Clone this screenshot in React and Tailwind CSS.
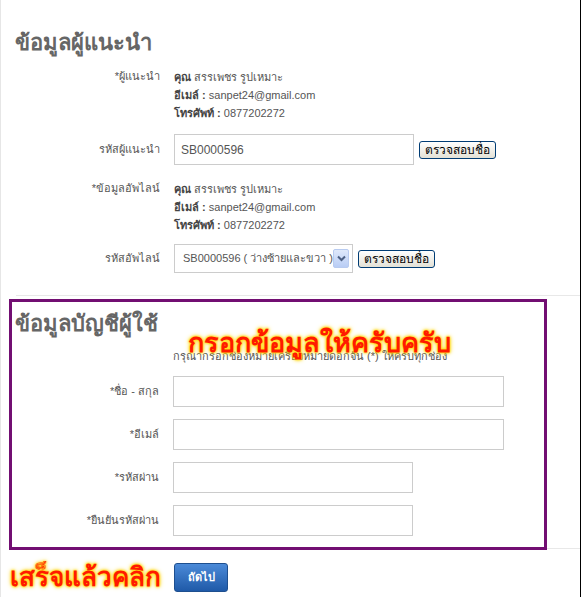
import React from 'react';

const FONT = "font-['Liberation_Sans',_'DejaVu_Sans',_sans-serif]";
const GLOW = "[text-shadow:0_0_2px_#ffee00,0_0_3px_#ffcc00,0_0_5px_#ffd000]";

const XpButton = ({ children }) => (
  <button className="h-[18px] px-[5px] rounded-[3px] border border-[#003c74] bg-gradient-to-b from-white to-[#e3e1d6] text-[12px] leading-none text-black">
    {children}
  </button>
);

const InfoBlock = () => (
  <div className="text-[11px] leading-[18px] text-[#555]">
    <p><b className="text-[#444]">คุณ</b> สรรเพชร รูปเหมาะ</p>
    <p><b className="text-[#444]">อีเมล์ :</b> sanpet24@gmail.com</p>
    <p><b className="text-[#444]">โทรศัพท์ :</b> 0877202272</p>
  </div>
);

const Row = ({ label, children, className = '', labelClass = 'items-center' }) => (
  <div className={`flex ${labelClass} ${className}`}>
    <div className="w-[160px] shrink-0 text-right text-[11px] text-[#555] pr-[1px]">{label}</div>
    <div className="ml-[13px] flex items-center gap-[5px]">{children}</div>
  </div>
);

const TextBox = ({ w, value = '' }) => (
  <div className={`${w} h-[31px] border border-[#ccc] bg-white flex items-center px-[6px] text-[12px] text-[#555]`}>
    {value}
  </div>
);

export default function App() {
  return (
    <div className={`w-[581px] h-[597px] bg-white border-l border-[#e6e6e6] border-r border-r-black overflow-hidden ${FONT}`}>
      {/* ข้อมูลผู้แนะนำ */}
      <div className="pt-[30px]">
        <h2 className="pl-[14px] text-[22px] leading-[26px] font-bold text-[#666]">ข้อมูลผู้แนะนำ</h2>

        <Row label="*ผู้แนะนำ" className="mt-[12px]" labelClass="items-start">
          <InfoBlock />
        </Row>

        <Row label="รหัสผู้แนะนำ" className="mt-[12px]">
          <TextBox w="w-[240px]" value="SB0000596" />
          <XpButton>ตรวจสอบชื่อ</XpButton>
        </Row>

        <Row label="*ข้อมูลอัพไลน์" className="mt-[15px]" labelClass="items-start">
          <InfoBlock />
        </Row>

        <Row label="รหัสอัพไลน์" className="mt-[10px]">
          <div className="w-[179px] h-[29px] border border-[#ccc] bg-white flex items-center pl-[8px] pr-[3px] text-[11px] text-[#555]">
            <span className="flex-1 whitespace-nowrap">SB0000596 ( ว่างซ้ายและขวา )</span>
            <span className="w-[17px] h-[19px] rounded-[2px] border border-[#b8cbf0] bg-gradient-to-b from-[#dfe9fb] to-[#b9cdf5] flex items-center justify-center">
              <svg width="9" height="7" viewBox="0 0 9 7"><path d="M1 1.5 L4.5 5 L8 1.5" stroke="#4d6185" strokeWidth="2" fill="none" /></svg>
            </span>
          </div>
          <XpButton>ตรวจสอบชื่อ</XpButton>
        </Row>
      </div>

      <div className="mt-[22px] ml-[15px] border-t border-[#e8e8e8]" />

      {/* ข้อมูลบัญชีผู้ใช้ */}
      <div className="flex mt-[3px]">
        <div className="relative ml-[8px] w-[538px] h-[251px] border-[3px] border-[#720e72]">
          <h2 className="pl-[3px] pt-[9px] text-[22px] leading-[26px] font-bold text-[#666]">ข้อมูลบัญชีผู้ใช้</h2>
          <p className="ml-[161px] mt-[12px] text-[11px] leading-[14px] text-[#555]">
            กรุณากรอกช่องหมายเครื่องหมายดอกจัน (*) ให้ครบทุกช่อง
          </p>
          <div className={`absolute left-[176px] top-[25px] whitespace-nowrap text-[27px] leading-[32px] font-bold text-[#ff1a00] ${GLOW}`}>
            กรอกข้อมูลให้ครับครับ
          </div>
          <div className="-ml-[12px] mt-[13px] flex flex-col gap-[12px]">
            <Row label="*ชื่อ - สกุล"><TextBox w="w-[331px]" /></Row>
            <Row label="*อีเมล์"><TextBox w="w-[331px]" /></Row>
            <Row label="*รหัสผ่าน"><TextBox w="w-[240px]" /></Row>
            <Row label="*ยืนยันรหัสผ่าน"><TextBox w="w-[240px]" /></Row>
          </div>
        </div>
        <div className="flex-1 self-end border-b border-[#e8e8e8] mb-[1px]" />
      </div>

      {/* ปุ่มถัดไป */}
      <div className="flex items-center mt-[12px] pl-[9px]">
        <span className={`w-[164px] whitespace-nowrap text-[26px] leading-[30px] font-bold text-[#ff1a00] ${GLOW}`}>เสร็จแล้วคลิก</span>
        <button className="w-[54px] h-[29px] rounded-[3px] border border-[#1e4f8f] bg-gradient-to-b from-[#4b8ad8] to-[#1f5aa8] text-white text-[11px] font-bold">
          ถัดไป
        </button>
      </div>
    </div>
  );
}
